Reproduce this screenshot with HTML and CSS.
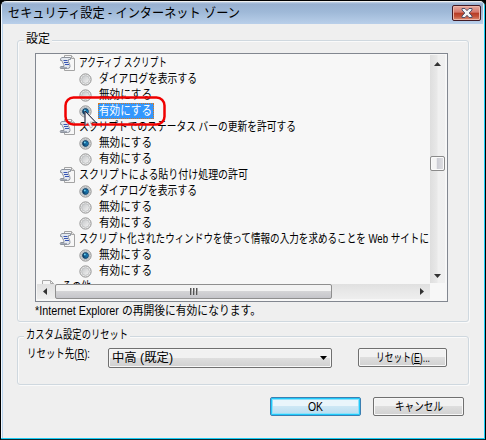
FILE: index.html
```html
<!DOCTYPE html>
<html lang="ja">
<head>
<meta charset="utf-8">
<title>セキュリティ設定 - インターネット ゾーン</title>
<link rel="stylesheet" href="styles.css">
</head>
<body>
<svg class="defs" width="0" height="0">
  <linearGradient id="dot"><stop offset="0" stop-color="#063b66"/><stop offset="1" stop-color="#1c86c4"/></linearGradient>
  <linearGradient id="well" x2="1" y2="1"><stop offset="0" stop-color="#c4c6c8"/><stop offset="1" stop-color="#f4f4f4"/></linearGradient>
  <symbol id="script" viewBox="0 0 16 16">
    <path d="M5.500.5h7l3 3v12h-10z" fill="#f7f7f7" stroke="#a4a4a4"/>
    <path d="M12.500.5v3h3" fill="#e4e4e4" stroke="#a4a4a4"/>
    <path d="M3 2.500h8.500v2H9.500q-.5 2 .5 3.500t1 3.500-2.500 2h-7q-1-2 .5-2h3q0-2-1-3.500T3 5.500H1.500Q1 3 3 2.500z" fill="#e3e8f0" stroke="#8d939d"/>
    <path d="M4.500 5.500h4M5 7.500h4M6 9.500h4" stroke="#3a57b4" stroke-width="1"/>
    <path d="M2 12.500h6" stroke="#a4abb8"/>
  </symbol>
  <symbol id="off" viewBox="0 0 13 13">
    <circle cx="6.500" cy="6.500" r="5.600" fill="#f6f6f6" stroke="#8c8c8c"/>
    <circle cx="6.500" cy="6.500" r="3.900" fill="url(#well)" stroke="#bfc1c2"/>
  </symbol>
  <symbol id="on" viewBox="0 0 13 13">
    <circle cx="6.500" cy="6.500" r="5.600" fill="#f4f4f4" stroke="#858585"/>
    <circle cx="6.500" cy="6.500" r="4.100" fill="#d3dce2" stroke="#a8b0b5" stroke-width=".8"/>
    <circle cx="6.500" cy="6.500" r="3" fill="url(#dot)" stroke="#123955" stroke-width=".8"/>
    <circle cx="5.800" cy="5.600" r="1" fill="#6ed0ee"/>
  </symbol>
</svg>
<div class="window">
  <header class="titlebar">
    <h1 class="title"><span class="t" data-w="232">セキュリティ設定 - インターネット ゾーン</span></h1>
    <button class="close"><svg width="12" height="10" viewBox="0 0 12 10"><path d="M1 .5h3l2 2.200 2-2.200h3v1.500L8.200 5 11 8v1.500H8L6 7.300 4 9.500H1V8l2.800-3L1 2z" fill="#f4f4f4" stroke="#50526a"/></svg></button>
  </header>
  <main class="content">
    <section class="group settings">
      <h2 class="legend"><span class="t" data-w="24">設定</span></h2>
      <div class="list">
        <div class="rows">
          <div class="row head"><svg class="icon"><use href="#script"/></svg><span class="t" data-w="88">アクティブ スクリプト</span></div>
          <div class="row"><svg class="radio"><use href="#off"/></svg><span class="t" data-w="98">ダイアログを表示する</span></div>
          <div class="row"><svg class="radio"><use href="#off"/></svg><span class="t" data-w="53">無効にする</span></div>
          <div class="row"><svg class="radio"><use href="#on"/></svg><span class="selected"><span class="t" data-w="53">有効にする</span></span></div>
          <div class="row head"><svg class="icon"><use href="#script"/></svg><span class="t" data-w="217">スクリプトでのステータス バーの更新を許可する</span></div>
          <div class="row"><svg class="radio"><use href="#on"/></svg><span class="t" data-w="53">無効にする</span></div>
          <div class="row"><svg class="radio"><use href="#off"/></svg><span class="t" data-w="53">有効にする</span></div>
          <div class="row head"><svg class="icon"><use href="#script"/></svg><span class="t" data-w="169">スクリプトによる貼り付け処理の許可</span></div>
          <div class="row"><svg class="radio"><use href="#on"/></svg><span class="t" data-w="98">ダイアログを表示する</span></div>
          <div class="row"><svg class="radio"><use href="#off"/></svg><span class="t" data-w="53">無効にする</span></div>
          <div class="row"><svg class="radio"><use href="#off"/></svg><span class="t" data-w="53">有効にする</span></div>
          <div class="row head"><svg class="icon"><use href="#script"/></svg><span class="t" data-w="350">スクリプト化されたウィンドウを使って情報の入力を求めることを Web サイトに</span></div>
          <div class="row"><svg class="radio"><use href="#on"/></svg><span class="t" data-w="53">無効にする</span></div>
          <div class="row"><svg class="radio"><use href="#off"/></svg><span class="t" data-w="53">有効にする</span></div>
          <div class="row root"><svg class="icon" viewBox="0 0 16 16"><path d="M3.500 1.500h8l3 3v11h-11z" fill="#f7f7f7" stroke="#aaa"/><path d="M11.500 1.500v3h3" fill="none" stroke="#aaa"/></svg><span class="t" data-w="29">その他</span></div>
        </div>
        <div class="vscroll"><svg class="arrow" width="7" height="4"><path d="M0 4L3.500 0 7 4z"/></svg><div class="vthumb"></div><svg class="arrow" width="7" height="4"><path d="M0 0h7L3.500 4z"/></svg></div>
        <div class="hscroll"><svg class="arrow" width="4" height="7"><path d="M4 0v7L0 3.500z"/></svg><div class="hthumb"><i></i><i></i><i></i></div><svg class="arrow" width="4" height="7"><path d="M0 0v7l4-3.500z"/></svg></div>
      </div>
      <p class="note"><span class="t" data-w="226">*Internet Explorer の再開後に有効になります。</span></p>
    </section>
    <section class="group reset">
      <h2 class="legend"><span class="t" data-w="102">カスタム設定のリセット</span></h2>
      <div class="form">
        <label class="label"><span class="t" data-w="63">リセット先(<u>R</u>):</span></label>
        <div class="combo"><span class="t" data-w="61">中高 (既定)</span><svg class="down" width="7" height="4"><path d="M0 0h7L3.500 4z"/></svg></div>
        <button class="btn small"><span class="t" data-w="54">リセット(<u>E</u>)...</span></button>
      </div>
    </section>
    <footer class="actions">
      <button class="btn default"><span class="t" data-w="15">OK</span></button>
      <button class="btn"><span class="t" data-w="48">キャンセル</span></button>
    </footer>
  </main>
  <svg class="highlight" width="102" height="30"><rect x="1.500" y="1.500" width="99" height="27" rx="8"/></svg>
  <svg class="cursor" width="13" height="20" viewBox="0 0 13 20"><path d="M1 1v14l3-2.500 2.500 5.500 2-1-2.500-5h5.500z" fill="#f6f6f8" stroke="#a5a6b2" stroke-width=".7"/><path d="M1 15V1l10.500 11" fill="none" stroke="#25263d"/></svg>
</div>
<script src="fit.js"></script>
</body>
</html>
```
FILE: styles.css
```css
* { box-sizing: border-box; }
body { margin: 0; background: #000; color: #000; font: 12px/16px "Liberation Sans", "Noto Sans CJK JP", sans-serif; }
h1, h2, p { margin: 0; font-size: 12px; font-weight: normal; }
button { margin: 0; padding: 0; font: inherit; color: inherit; }
svg { display: block; flex: none; }
.defs { position: absolute; }
.t { display: inline-block; white-space: nowrap; transform-origin: 0 50%; }
.window { position: relative; width: 486px; height: 440px; padding: 1px; border: 1px solid #000; border-bottom-color: #10262c; border-radius: 6px 6px 0 0; background: #efefef; box-shadow: inset -1px -1px #19cdf5, inset 1px 0 #f1f8ff, inset 2px 0 #b9d3ec; overflow: hidden; }
.titlebar { display: flex; justify-content: space-between; height: 22px; margin-right: 1px; padding: 3px 2px 0 6px; background: linear-gradient(#c3d3e7 0, #98b0d0 2px, #9fb9d8 10px, #b9cfea); }
.title { font-size: 13px; line-height: 16px; }
.close { display: flex; align-items: center; justify-content: center; width: 29px; height: 16px; border: 1px solid #421a24; border-radius: 2px; background: linear-gradient(#e7aaa0, #d4776a 45%, #b63a24 50%, #c4543a 75%, #dd8e74); box-shadow: inset 0 0 0 1px #edb6a8; }
.content { display: flex; flex-direction: column; padding: 16px 0 0 15px; }
.group { width: 452px; border: 1px solid #cfd8df; border-radius: 3px; box-shadow: inset 1px 1px #fafafa, 1px 1px #fafafa; }
.legend { width: max-content; height: 16px; margin: -10px 0 0 6px; padding: 0 2px; background: #efefef; }
.settings { height: 282px; }
.list { display: grid; grid-template: 229px 15px / 393px 15px; width: 413px; height: 249px; margin: 6px 0 0 17px; padding: 1px; border: 1px solid #828790; background: #f7f7f7; }
.rows { overflow: hidden; }
.row { display: flex; align-items: center; height: 16px; padding-left: 42px; gap: 7px; white-space: nowrap; }
.row.head { padding-left: 22px; gap: 4px; }
.row.root { padding-left: 2px; gap: 7px; }
.icon { width: 16px; height: 16px; }
.radio { width: 13px; height: 13px; }
.selected { width: 56px; height: 16px; margin-left: -1px; padding-left: 1px; outline: 1px dotted #d67a20; outline-offset: -1px; background: #3397fd; color: #fff; line-height: 16px; }
.vscroll { display: flex; flex-direction: column; align-items: center; height: 228px; padding: 7px 0 5px; background: linear-gradient(90deg, #dedede, #e8e8e8 45%, #f0f0f0 55%, #efefef); }
.vthumb { width: 15px; height: 15px; margin: 90px 0 auto; border: 1px solid #8b8b8b; border-radius: 2px; background: linear-gradient(90deg, #f4f4f4 40%, #cdced5 50%, #e0e0e3); box-shadow: inset 0 0 0 1px #fafafa; }
.hscroll { display: flex; align-items: center; height: 15px; padding: 0 6px; background: linear-gradient(#e0e0e0, #e8e8e8 50%, #eee); }
.hthumb { display: flex; align-items: center; justify-content: center; gap: 2px; width: 277px; height: 15px; margin: 0 auto 0 8px; border: 1px solid #8f8f8f; border-radius: 2px; background: linear-gradient(#f3f3f3 45%, #d4d4d6 50%, #c5c5ca); }
.hthumb i { width: 1px; height: 7px; background: #555; box-shadow: 1px 0 #aaa; }
.arrow { fill: #333; }
.note { margin: 1px 0 0 17px; }
.reset { height: 49px; margin-top: 14px; }
.form { display: flex; align-items: flex-start; padding: 2px 0 0 9px; }
.label { width: 81px; height: 16px; margin-top: 1px; }
.combo { display: flex; align-items: center; justify-content: space-between; width: 224px; height: 20px; margin-top: 3px; padding: 0 4px 0 3px; border: 1px solid #707070; border-radius: 2px; background: linear-gradient(#f1f1f1 50%, #dedede 50%, #d0d0d0); box-shadow: inset 0 0 0 1px #f7f7f7; }
.down { fill: #000; }
.btn { display: flex; align-items: center; justify-content: center; width: 91px; height: 19px; border: 1px solid #707070; border-radius: 2px; background: linear-gradient(#f2f2f2 48%, #dedede 50%, #d1d1d1); box-shadow: inset 0 0 0 1px #f8f8f8; }
.btn.small { width: 89px; margin: 3px 0 0 26px; }
.btn.default { border-color: #3c7fb1; background: linear-gradient(#eaf5fb 48%, #cde7f5 50%, #b8dcef); box-shadow: inset 0 0 0 1px #20cafb, inset 0 0 0 2px #8fe0fa; }
.actions { display: flex; gap: 12px; margin: 12px 0 0 253px; }
.highlight { position: absolute; left: 63px; top: 95px; fill: none; stroke: #f00000; stroke-width: 2.500px; }
.cursor { position: absolute; left: 83px; top: 109px; }
```
FILE: fit.js
```js
// Condense each label to its dialog width.
document.querySelectorAll('.t').forEach(function (el) {
  var natural = el.getBoundingClientRect().width;
  var target = Number(el.dataset.w);
  el.style.transform = 'scaleX(' + target / natural + ')';
  el.style.marginRight = (target - natural) + 'px';
});
```
